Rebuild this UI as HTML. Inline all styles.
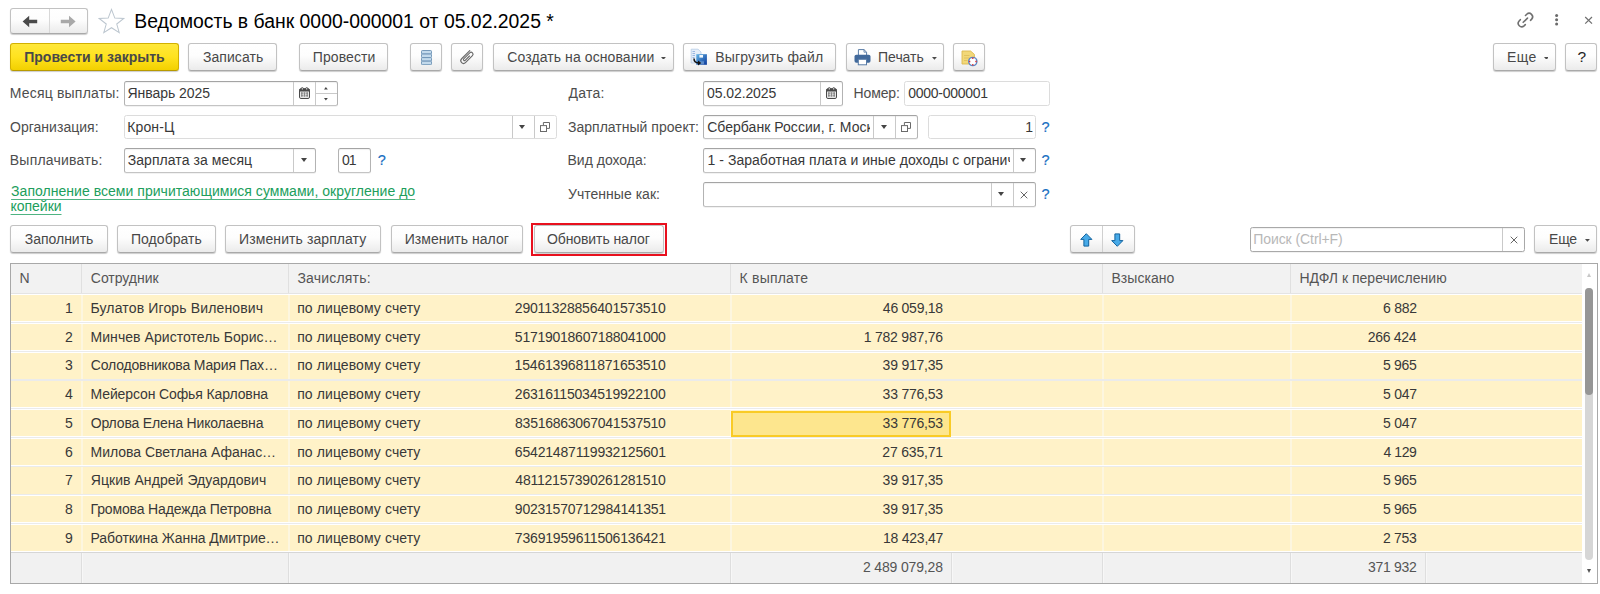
<!DOCTYPE html><html lang="ru"><head><meta charset="utf-8"><title>Ведомость в банк</title><style>
*{box-sizing:border-box;margin:0;padding:0}
html,body{width:1600px;height:594px;overflow:hidden;background:#fff}
body{font-family:"Liberation Sans",sans-serif;font-size:14px;color:#333;position:relative}
.a{position:absolute;white-space:nowrap}
.t{position:absolute;white-space:nowrap;font-size:14px;line-height:16px;color:#383838}
.btn{position:absolute;height:27.5px;border:1px solid #c2c2c2;border-bottom-color:#a9a9a9;border-radius:3px;
 background:linear-gradient(#ffffff 0%,#fdfdfd 45%,#ebebeb 100%);box-shadow:0 1px 1px rgba(0,0,0,.2)}
.btn.y{background:linear-gradient(#ffe83a 0%,#ffe21f 50%,#f2d000 100%);border-color:#d2b000;border-bottom-color:#b89a00}
.inp{position:absolute;height:24.6px;border:1px solid #b3b3b3;border-top-color:#a4a4a4;border-bottom-color:#c4c4c4;border-radius:2.5px;background:#fff;overflow:hidden;box-shadow:inset 0 1px 1px rgba(0,0,0,.06),0 1px 0 rgba(0,0,0,.05)}
.inp.l{border-color:#dcdcdc;box-shadow:none}
.dv{position:absolute;top:0;bottom:0;width:1px;background:#c9c9c9}
.tri{position:absolute;width:0;height:0;border-left:3px solid transparent;border-right:3px solid transparent;border-top:4px solid #444}
.row{position:absolute;left:11px;width:1571px;height:26.1px;background:#fff2c8}
.vs{position:absolute;width:2px;background:#fdf6df}
</style></head><body>
<div class="btn" style="left:10px;top:8px;width:77.5px;height:26px"><div class="dv" style="left:38px;background:#d8d8d8"></div><svg class="a" style="left:0;top:0" width="77" height="24" viewBox="0 0 77 24"><path d="M11.6 12.5 L18.2 6.7 V10.8 H26.2 V14.2 H18.2 V18.3 Z" fill="#4a4a4a"/><path d="M64.6 12.5 L58 6.7 V10.8 H49.8 V14.2 H58 V18.3 Z" fill="#a9a9a9"/></svg></div>
<svg class="a" style="left:98px;top:8px" width="28" height="26" viewBox="0 0 28 26"><path transform="translate(13.5 13.6) scale(1.07) translate(-13.5 -13.9)" d="M13.5 2.5 L16.6 10.6 L25 11 L18.4 16.2 L20.7 24.2 L13.5 19.6 L6.3 24.2 L8.6 16.2 L2 11 L10.4 10.6 Z" fill="#fff" stroke="#bcc6cf" stroke-width="0.95"/></svg>
<div class="t" style="left:134.30px;top:9.58px;font-size:19.4px;line-height:22px;color:#000;">Ведомость в банк 0000-000001 от 05.02.2025 *</div>
<svg class="a" style="left:1512px;top:8px" width="24" height="24" viewBox="0 0 24 24"><g fill="none" stroke="#707070" stroke-width="1.6" stroke-linecap="round"><path d="M13.5 7.5 L14.73 6.23 A3.5 3.5 0 0 1 19.67 11.17 L18.5 12.3"/><path d="M8.3 11.7 L7.13 12.93 A3.5 3.5 0 0 0 12.07 17.87 L13.3 16.6"/><path d="M11.2 14.3 L15.5 10.1"/></g></svg>
<svg class="a" style="left:1554px;top:13px" width="6" height="14" viewBox="0 0 6 14"><circle cx="2.6" cy="2.6" r="1.5" fill="#6a6a6a"/><circle cx="2.6" cy="6.85" r="1.5" fill="#6a6a6a"/><circle cx="2.6" cy="11.1" r="1.5" fill="#6a6a6a"/></svg>
<svg class="a" style="left:1584px;top:16px" width="10" height="9" viewBox="0 0 10 9"><path d="M1.2 1 L8 7.6 M8 1 L1.2 7.6" stroke="#707070" stroke-width="1.25" fill="none"/></svg>
<div class="btn y" style="left:10px;top:43px;width:168.6px"></div>
<div class="t" style="left:24.20px;top:48.55px;font-weight:700;color:#484848;letter-spacing:0.009px;">Провести и закрыть</div>
<div class="btn " style="left:188px;top:43px;width:89.2px"></div>
<div class="t" style="left:203.00px;top:48.55px;color:#484848;letter-spacing:0.050px;">Записать</div>
<div class="btn " style="left:298.5px;top:43px;width:89.5px"></div>
<div class="t" style="left:312.80px;top:48.55px;color:#484848;letter-spacing:0.100px;">Провести</div>
<div class="btn " style="left:410px;top:43px;width:31.7px"><svg class="a" style="left:9.7px;top:5.8px" width="11" height="15.2" viewBox="0 0 11 15.4" preserveAspectRatio="none"><rect x="0.5" y="0.5" width="10" height="3.6" rx="0.9" fill="#c3daec" stroke="#678fb3" stroke-width="0.9"/><rect x="0.5" y="4.1" width="10" height="3.6" rx="0.9" fill="#c3daec" stroke="#678fb3" stroke-width="0.9"/><rect x="0.5" y="7.7" width="10" height="3.6" rx="0.9" fill="#c3daec" stroke="#678fb3" stroke-width="0.9"/><rect x="0.5" y="11.3" width="10" height="3.6" rx="0.9" fill="#c3daec" stroke="#678fb3" stroke-width="0.9"/></svg></div>
<div class="btn " style="left:451px;top:43px;width:31.8px"><svg class="a" style="left:0;top:0" width="30" height="26" viewBox="0 0 30 26"><path transform="translate(15 13.2) rotate(45)" d="M-2.7 -6.6 V4.9 A2.7 2.7 0 0 0 2.7 4.9 V-5 A1.9 1.9 0 0 0 -1.1 -5 V3.5 A1 1 0 0 0 0.9 3.5 V-2.6" fill="none" stroke="#6a6a6a" stroke-width="1.15" stroke-linecap="round"/></svg></div>
<div class="btn " style="left:492.5px;top:43px;width:181.0px"></div>
<div class="t" style="left:507.25px;top:48.55px;color:#484848;letter-spacing:0.095px;">Создать на основании</div>
<svg class="a" style="left:661.3px;top:56.6px" width="4.9" height="2.8" viewBox="0 0 4.9 2.8"><path d="M0 0H4.9L2.45 2.8Z" fill="#4a4a4a"/></svg>
<div class="btn " style="left:683px;top:43px;width:153.3px"><svg class="a" style="left:6px;top:4px" width="18" height="19" viewBox="0 0 18 19"><defs><linearGradient id="fg" x1="0" y1="0" x2="1" y2="1"><stop offset="0" stop-color="#62b4e6"/><stop offset="1" stop-color="#0a389a"/></linearGradient></defs><path d="M1.2 1.2H8L11 4V15H1.2Z" fill="#e4edf8" stroke="#b5cbe6" stroke-width=".8"/><path d="M2.5 3.5H5M2.5 5.5H5M2.5 7.5H5M2.5 9.5H4.5" stroke="#8fb0dc" stroke-width=".9"/><rect x="6.3" y="6.2" width="10.6" height="10.6" fill="url(#fg)"/><rect x="9.4" y="7" width="3.6" height="2.6" fill="#f4f8fc"/><rect x="10" y="13.3" width="4" height="3" fill="#8fb4dc" opacity=".55"/><path d="M4 10.6 C4 13.6 5.6 15 8.6 15" stroke="#111" stroke-width="1.5" fill="none"/><path d="M8 12.6 L11.2 15 L8 17.4Z" fill="#111"/></svg></div>
<div class="t" style="left:715.30px;top:48.55px;color:#484848;letter-spacing:0.119px;">Выгрузить файл</div>
<div class="btn " style="left:846px;top:43px;width:98.0px"><svg class="a" style="left:6.6px;top:5.3px" width="17" height="16.4" viewBox="0 0 17 16.4"><path d="M4.4 6.5V0.6H10L12.6 3.2V6.5Z" fill="#fff" stroke="#587ba6" stroke-width="1"/><path d="M10 0.6V3.2H12.6" fill="none" stroke="#587ba6" stroke-width=".8"/><rect x="0.5" y="5.8" width="16" height="8" rx="1.8" fill="#41699b"/><rect x="4.3" y="10.3" width="8.2" height="5.5" fill="#fff" stroke="#587ba6" stroke-width="1"/></svg></div>
<div class="t" style="left:878.10px;top:48.55px;color:#484848;letter-spacing:-0.050px;">Печать</div>
<svg class="a" style="left:931.8px;top:56.9px" width="4.9" height="2.8" viewBox="0 0 4.9 2.8"><path d="M0 0H4.9L2.45 2.8Z" fill="#4a4a4a"/></svg>
<div class="btn " style="left:953px;top:43px;width:31.5px"><svg class="a" style="left:7px;top:5.6px" width="17" height="17" viewBox="0 0 17 17"><path d="M1 1 H9.6 L13.4 4.4 V14 H1Z" fill="#f2d878" stroke="#dcb94e" stroke-width=".9"/><path d="M3 5.5H8.5M3 8H8.5M3 10.5H6.5" stroke="#dfc05a" stroke-width=".9"/><circle cx="11.8" cy="11.5" r="4.1" fill="#fff" stroke="#5b87c5" stroke-width="1.4"/><path d="M11.8 7.6V9M11.8 14V15.4M7.9 11.5H9.3M14.3 11.5H15.7" stroke="#e03030" stroke-width="1.3"/></svg></div>
<div class="btn " style="left:1493px;top:43px;width:62.6px"></div>
<div class="t" style="left:1507.00px;top:48.55px;color:#484848;letter-spacing:0.450px;">Еще</div>
<svg class="a" style="left:1543.5px;top:56.6px" width="4.9" height="2.8" viewBox="0 0 4.9 2.8"><path d="M0 0H4.9L2.45 2.8Z" fill="#4a4a4a"/></svg>
<div class="btn " style="left:1565px;top:43px;width:32.0px"></div>
<div class="t" style="left:1577.45px;top:47.63px;font-size:15.5px;line-height:18px;color:#222;">?</div>
<div class="t" style="left:9.80px;top:85.15px;color:#4d4d4d;letter-spacing:0.185px;">Месяц выплаты:</div>
<div class="inp " style="left:124px;top:81px;width:213.8px;"><div class="dv" style="left:168.4px"></div><svg class="a" style="left:174px;top:5px" width="11" height="12" viewBox="0 0 11 12"><rect x="0.5" y="1.7" width="10" height="9.8" rx="1.4" fill="#e6e6e6" stroke="#4a4a4a" stroke-width="1"/><path d="M0.5 4.6V3.1Q0.5 1.7 1.9 1.7H9.1Q10.5 1.7 10.5 3.1V4.6Z" fill="#4a4a4a"/><rect x="2.1" y="0.2" width="2.3" height="2.6" rx="1.1" fill="#4a4a4a"/><rect x="6.6" y="0.2" width="2.3" height="2.6" rx="1.1" fill="#4a4a4a"/><rect x="2.8" y="1" width=".9" height="1.6" fill="#eee"/><rect x="7.3" y="1" width=".9" height="1.6" fill="#eee"/><path d="M2 6.1h1.7M4.7 6.1h1.6M7.3 6.1H9M2 8.8h1.7M4.7 8.8h1.6M7.3 8.8H9" stroke="#4a4a4a" stroke-width=".9"/><path d="M2.8 5.6V9.6M5.5 5.4V9.6M8.2 5.6V9.6" stroke="#8a8a8a" stroke-width="1.3"/></svg><div class="dv" style="left:190px"></div><div class="a" style="left:191px;top:10.5px;width:22px;height:1px;background:#c9c9c9"></div><svg class="a" style="left:199.3px;top:5.2px" width="4" height="14" viewBox="0 0 4 14"><path d="M0 2.4L1.9 0L3.8 2.4Z" fill="#444"/><path d="M0 11L1.9 13.4L3.8 11Z" fill="#444"/></svg></div>
<div class="t" style="left:127.45px;top:85.15px;letter-spacing:-0.035px;">Январь 2025</div>
<div class="t" style="left:568.50px;top:85.15px;color:#4d4d4d;letter-spacing:0.262px;">Дата:</div>
<div class="inp " style="left:703.3px;top:81px;width:140.0px;"><div class="dv" style="left:116px"></div><svg class="a" style="left:121.5px;top:5px" width="11" height="12" viewBox="0 0 11 12"><rect x="0.5" y="1.7" width="10" height="9.8" rx="1.4" fill="#e6e6e6" stroke="#4a4a4a" stroke-width="1"/><path d="M0.5 4.6V3.1Q0.5 1.7 1.9 1.7H9.1Q10.5 1.7 10.5 3.1V4.6Z" fill="#4a4a4a"/><rect x="2.1" y="0.2" width="2.3" height="2.6" rx="1.1" fill="#4a4a4a"/><rect x="6.6" y="0.2" width="2.3" height="2.6" rx="1.1" fill="#4a4a4a"/><rect x="2.8" y="1" width=".9" height="1.6" fill="#eee"/><rect x="7.3" y="1" width=".9" height="1.6" fill="#eee"/><path d="M2 6.1h1.7M4.7 6.1h1.6M7.3 6.1H9M2 8.8h1.7M4.7 8.8h1.6M7.3 8.8H9" stroke="#4a4a4a" stroke-width=".9"/><path d="M2.8 5.6V9.6M5.5 5.4V9.6M8.2 5.6V9.6" stroke="#8a8a8a" stroke-width="1.3"/></svg></div>
<div class="t" style="left:707.10px;top:85.15px;letter-spacing:-0.100px;">05.02.2025</div>
<div class="t" style="left:853.60px;top:85.15px;color:#4d4d4d;letter-spacing:-0.150px;">Номер:</div>
<div class="inp l" style="left:904px;top:81px;width:145.8px;"></div>
<div class="t" style="left:908.20px;top:85.15px;letter-spacing:-0.270px;">0000-000001</div>
<div class="t" style="left:10.05px;top:119.35px;color:#4d4d4d;letter-spacing:0.014px;">Организация:</div>
<div class="inp l" style="left:124px;top:115px;width:432.5px;height:24px;"><div class="dv" style="left:387px"></div><div class="tri" style="left:394px;top:9px"></div><div class="dv" style="left:409px"></div><svg class="a" style="left:415px;top:5.6px" width="10" height="10" viewBox="0 0 10 10"><path d="M3.4 3.4V0.5H9.5V6.4H6.6" fill="none" stroke="#6a6a6a" stroke-width="1"/><rect x="0.5" y="3.6" width="6" height="5.9" fill="#fff" stroke="#6a6a6a" stroke-width="1"/></svg></div>
<div class="t" style="left:127.20px;top:119.35px;letter-spacing:0.150px;">Крон-Ц</div>
<div class="t" style="left:568.00px;top:119.35px;color:#4d4d4d;letter-spacing:0.018px;">Зарплатный проект:</div>
<div class="inp " style="left:703.3px;top:115px;width:214.5px;height:24px;"><div class="dv" style="left:168.7px"></div><div class="tri" style="left:176.3px;top:9px"></div><div class="dv" style="left:190.6px"></div><svg class="a" style="left:197px;top:5.6px" width="10" height="10" viewBox="0 0 10 10"><path d="M3.4 3.4V0.5H9.5V6.4H6.6" fill="none" stroke="#6a6a6a" stroke-width="1"/><rect x="0.5" y="3.6" width="6" height="5.9" fill="#fff" stroke="#6a6a6a" stroke-width="1"/></svg></div>
<div class="t" style="left:707.15px;top:119.35px;letter-spacing:0.040px;width:163px;overflow:hidden;">Сбербанк России, г. Моск</div>
<div class="inp l" style="left:928.4px;top:115px;width:107.2px;height:24px;"></div>
<div class="t" style="left:1025.30px;top:118.95px;">1</div>
<div class="t" style="left:1041.50px;top:118.78px;font-size:14.5px;line-height:17px;color:#1a70c2;-webkit-text-stroke:0.2px #1a70c2;">?</div>
<div class="t" style="left:9.80px;top:152.45px;color:#4d4d4d;letter-spacing:0.223px;">Выплачивать:</div>
<div class="inp " style="left:124px;top:148px;width:191.8px;"><div class="dv" style="left:168px"></div><div class="tri" style="left:176px;top:9px"></div></div>
<div class="t" style="left:127.70px;top:152.45px;letter-spacing:0.069px;">Зарплата за месяц</div>
<div class="inp " style="left:338.4px;top:148px;width:32.2px;"></div>
<div class="t" style="left:341.90px;top:152.45px;letter-spacing:-0.900px;">01</div>
<div class="t" style="left:377.70px;top:152.08px;font-size:14.5px;line-height:17px;color:#1a70c2;-webkit-text-stroke:0.2px #1a70c2;">?</div>
<div class="t" style="left:567.50px;top:152.45px;color:#4d4d4d;">Вид дохода:</div>
<div class="inp " style="left:703.3px;top:148px;width:332.3px;height:24.6px;"><div class="dv" style="left:308.3px"></div><div class="tri" style="left:316px;top:9px"></div></div>
<div class="t" style="left:707.50px;top:152.45px;letter-spacing:0.040px;width:302px;overflow:hidden;">1 - Заработная плата и иные доходы с огранич</div>
<div class="t" style="left:1041.50px;top:152.08px;font-size:14.5px;line-height:17px;color:#1a70c2;-webkit-text-stroke:0.2px #1a70c2;">?</div>
<div class="t" style="left:11.10px;top:182.75px;color:#209e5c;letter-spacing:0.033px;text-decoration:underline;text-decoration-skip-ink:none;text-decoration-color:#4fb382;text-decoration-thickness:1px;text-underline-offset:2.5px;">Заполнение всеми причитающимися суммами, округление до</div>
<div class="t" style="left:10.60px;top:198.45px;color:#209e5c;letter-spacing:-0.042px;text-decoration:underline;text-decoration-skip-ink:none;text-decoration-color:#4fb382;text-decoration-thickness:1px;text-underline-offset:2.5px;">копейки</div>
<div class="t" style="left:568.00px;top:186.15px;color:#4d4d4d;letter-spacing:0.025px;">Учтенные как:</div>
<div class="inp " style="left:703.3px;top:182px;width:332.3px;height:24.6px;"><div class="dv" style="left:286.6px"></div><div class="tri" style="left:294px;top:9px"></div><div class="dv" style="left:308.3px"></div><svg class="a" style="left:315.5px;top:7.5px" width="8" height="8" viewBox="0 0 8 8"><path d="M0.7 0.7L7.3 7.3M7.3 0.7L0.7 7.3" stroke="#666" stroke-width="1"/></svg></div>
<div class="t" style="left:1041.50px;top:185.98px;font-size:14.5px;line-height:17px;color:#1a70c2;-webkit-text-stroke:0.2px #1a70c2;">?</div>
<div class="btn " style="left:10px;top:225.4px;width:97.7px"></div>
<div class="t" style="left:24.70px;top:230.95px;color:#484848;letter-spacing:-0.006px;">Заполнить</div>
<div class="btn " style="left:117px;top:225.4px;width:98.5px"></div>
<div class="t" style="left:131.00px;top:230.95px;color:#484848;letter-spacing:0.037px;">Подобрать</div>
<div class="btn " style="left:225px;top:225.4px;width:155.9px"></div>
<div class="t" style="left:239.10px;top:230.95px;color:#484848;letter-spacing:0.084px;">Изменить зарплату</div>
<div class="btn " style="left:390.5px;top:225.4px;width:132.1px"></div>
<div class="t" style="left:404.70px;top:230.95px;color:#484848;letter-spacing:0.031px;">Изменить налог</div>
<div class="btn " style="left:534px;top:225.4px;width:130.0px"></div>
<div class="t" style="left:546.95px;top:230.95px;color:#484848;letter-spacing:-0.092px;">Обновить налог</div>
<div class="a" style="left:531px;top:222.8px;width:136.2px;height:33.2px;border:2px solid #e8101e"></div>
<div class="btn" style="left:1070px;top:225.4px;width:64.6px"><div class="dv" style="left:31px;background:#d0d0d0"></div><svg class="a" style="left:8.8px;top:6.2px" width="13" height="14" viewBox="0 0 13 14"><path d="M6.3 0.7 L11.9 6.4 H8.7 V13.1 H3.9 V6.4 H0.7Z" fill="#47aae8" stroke="#12639f" stroke-width="1" stroke-linejoin="round"/></svg><svg class="a" style="left:40.2px;top:6.2px" width="13" height="14" viewBox="0 0 13 14"><path d="M6.3 13.3 L11.9 7.6 H8.7 V0.9 H3.9 V7.6 H0.7Z" fill="#47aae8" stroke="#12639f" stroke-width="1" stroke-linejoin="round"/></svg></div>
<div class="inp " style="left:1250px;top:227.2px;width:275.0px;border-color:#a9a9a9;"><div class="dv" style="left:251px"></div><svg class="a" style="left:258.5px;top:7.5px" width="8" height="8" viewBox="0 0 8 8"><path d="M0.7 0.7L7.3 7.3M7.3 0.7L0.7 7.3" stroke="#666" stroke-width="1"/></svg></div>
<div class="t" style="left:1253.20px;top:230.95px;color:#b8b8b8;letter-spacing:-0.073px;">Поиск (Ctrl+F)</div>
<div class="btn " style="left:1534px;top:225.4px;width:63.0px"></div>
<div class="t" style="left:1549.00px;top:230.95px;color:#484848;letter-spacing:-0.200px;">Еще</div>
<svg class="a" style="left:1585.1px;top:239.0px" width="4.9" height="2.8" viewBox="0 0 4.9 2.8"><path d="M0 0H4.9L2.45 2.8Z" fill="#4a4a4a"/></svg>
<div class="a" style="left:10px;top:263px;width:1588px;height:320.5px;border:1px solid #a8a8a8;background:#fff"></div>
<div class="a" style="left:11px;top:264px;width:1571px;height:29.2px;background:#f2f2f2"></div>
<div class="a" style="left:11px;top:293px;width:1571px;height:1.2px;background:#e4e4e4"></div>
<div class="a" style="left:81px;top:264px;width:1.3px;height:29.2px;background:#e0e0e0"></div>
<div class="a" style="left:288px;top:264px;width:1.3px;height:29.2px;background:#e0e0e0"></div>
<div class="a" style="left:730px;top:264px;width:1.3px;height:29.2px;background:#e0e0e0"></div>
<div class="a" style="left:1102px;top:264px;width:1.3px;height:29.2px;background:#e0e0e0"></div>
<div class="a" style="left:1290px;top:264px;width:1.3px;height:29.2px;background:#e0e0e0"></div>
<div class="t" style="left:19.40px;top:269.75px;color:#555;">N</div>
<div class="t" style="left:90.85px;top:269.75px;color:#555;letter-spacing:-0.031px;">Сотрудник</div>
<div class="t" style="left:297.40px;top:269.75px;color:#555;letter-spacing:0.194px;">Зачислять:</div>
<div class="t" style="left:739.50px;top:269.75px;color:#555;letter-spacing:0.219px;">К выплате</div>
<div class="t" style="left:1111.50px;top:269.75px;color:#555;letter-spacing:0.029px;">Взыскано</div>
<div class="t" style="left:1299.40px;top:269.75px;color:#555;letter-spacing:0.006px;">НДФЛ к перечислению</div>
<div class="row" style="top:295.10px"></div>
<div class="a" style="left:11px;top:322.00px;width:1571px;height:1.1px;background:#ebebeb"></div>
<div class="vs" style="left:81px;top:295.10px;height:26.1px"></div>
<div class="vs" style="left:288px;top:295.10px;height:26.1px"></div>
<div class="vs" style="left:730px;top:295.10px;height:26.1px"></div>
<div class="vs" style="left:1102px;top:295.10px;height:26.1px"></div>
<div class="vs" style="left:1290px;top:295.10px;height:26.1px"></div>
<div class="t" style="left:65.10px;top:300.00px;">1</div>
<div class="t" style="left:90.50px;top:300.00px;letter-spacing:0.145px;">Булатов Игорь Виленович</div>
<div class="t" style="left:297.20px;top:300.00px;letter-spacing:0.094px;">по лицевому счету</div>
<div class="t" style="left:514.85px;top:300.00px;letter-spacing:-0.200px;">29011328856401573510</div>
<div class="t" style="left:882.87px;top:300.00px;letter-spacing:-0.253px;">46 059,18</div>
<div class="t" style="left:1382.89px;top:300.00px;letter-spacing:-0.210px;">6 882</div>
<div class="row" style="top:323.83px"></div>
<div class="a" style="left:11px;top:350.73px;width:1571px;height:1.1px;background:#ebebeb"></div>
<div class="vs" style="left:81px;top:323.83px;height:26.1px"></div>
<div class="vs" style="left:288px;top:323.83px;height:26.1px"></div>
<div class="vs" style="left:730px;top:323.83px;height:26.1px"></div>
<div class="vs" style="left:1102px;top:323.83px;height:26.1px"></div>
<div class="vs" style="left:1290px;top:323.83px;height:26.1px"></div>
<div class="t" style="left:65.10px;top:328.73px;">2</div>
<div class="t" style="left:90.50px;top:328.73px;letter-spacing:0.057px;">Минчев Аристотель Борис…</div>
<div class="t" style="left:297.20px;top:328.73px;letter-spacing:0.094px;">по лицевому счету</div>
<div class="t" style="left:514.85px;top:328.73px;letter-spacing:-0.253px;">51719018607188041000</div>
<div class="t" style="left:863.74px;top:328.73px;letter-spacing:-0.217px;">1 782 987,76</div>
<div class="t" style="left:1367.81px;top:328.73px;letter-spacing:-0.293px;">266 424</div>
<div class="row" style="top:352.56px"></div>
<div class="a" style="left:11px;top:379.46px;width:1571px;height:1.1px;background:#ebebeb"></div>
<div class="vs" style="left:81px;top:352.56px;height:26.1px"></div>
<div class="vs" style="left:288px;top:352.56px;height:26.1px"></div>
<div class="vs" style="left:730px;top:352.56px;height:26.1px"></div>
<div class="vs" style="left:1102px;top:352.56px;height:26.1px"></div>
<div class="vs" style="left:1290px;top:352.56px;height:26.1px"></div>
<div class="t" style="left:65.10px;top:357.46px;">3</div>
<div class="t" style="left:90.75px;top:357.46px;letter-spacing:-0.163px;">Солодовникова Мария Пах…</div>
<div class="t" style="left:297.20px;top:357.46px;letter-spacing:0.094px;">по лицевому счету</div>
<div class="t" style="left:514.60px;top:357.46px;letter-spacing:-0.187px;">15461396811871653510</div>
<div class="t" style="left:882.62px;top:357.46px;letter-spacing:-0.221px;">39 917,35</div>
<div class="t" style="left:1382.89px;top:357.46px;letter-spacing:-0.273px;">5 965</div>
<div class="row" style="top:381.29px"></div>
<div class="a" style="left:11px;top:408.19px;width:1571px;height:1.1px;background:#ebebeb"></div>
<div class="vs" style="left:81px;top:381.29px;height:26.1px"></div>
<div class="vs" style="left:288px;top:381.29px;height:26.1px"></div>
<div class="vs" style="left:730px;top:381.29px;height:26.1px"></div>
<div class="vs" style="left:1102px;top:381.29px;height:26.1px"></div>
<div class="vs" style="left:1290px;top:381.29px;height:26.1px"></div>
<div class="t" style="left:65.10px;top:386.19px;">4</div>
<div class="t" style="left:90.50px;top:386.19px;letter-spacing:-0.114px;">Мейерсон Софья Карловна</div>
<div class="t" style="left:297.20px;top:386.19px;letter-spacing:0.094px;">по лицевому счету</div>
<div class="t" style="left:514.85px;top:386.19px;letter-spacing:-0.200px;">26316115034519922100</div>
<div class="t" style="left:882.62px;top:386.19px;letter-spacing:-0.221px;">33 776,53</div>
<div class="t" style="left:1382.89px;top:386.19px;letter-spacing:-0.210px;">5 047</div>
<div class="row" style="top:410.02px"></div>
<div class="a" style="left:11px;top:436.92px;width:1571px;height:1.1px;background:#ebebeb"></div>
<div class="vs" style="left:81px;top:410.02px;height:26.1px"></div>
<div class="vs" style="left:288px;top:410.02px;height:26.1px"></div>
<div class="vs" style="left:730px;top:410.02px;height:26.1px"></div>
<div class="vs" style="left:1102px;top:410.02px;height:26.1px"></div>
<div class="vs" style="left:1290px;top:410.02px;height:26.1px"></div>
<div class="a" style="left:731px;top:410.52px;width:220px;height:26px;background:#fde68e;border:2.4px solid #f9cb26"></div>
<div class="t" style="left:65.10px;top:414.92px;">5</div>
<div class="t" style="left:90.75px;top:414.92px;letter-spacing:-0.166px;">Орлова Елена Николаевна</div>
<div class="t" style="left:297.20px;top:414.92px;letter-spacing:0.094px;">по лицевому счету</div>
<div class="t" style="left:515.10px;top:414.92px;letter-spacing:-0.266px;">83516863067041537510</div>
<div class="t" style="left:882.62px;top:414.92px;letter-spacing:-0.221px;">33 776,53</div>
<div class="t" style="left:1382.89px;top:414.92px;letter-spacing:-0.210px;">5 047</div>
<div class="row" style="top:438.75px"></div>
<div class="a" style="left:11px;top:465.65px;width:1571px;height:1.1px;background:#ebebeb"></div>
<div class="vs" style="left:81px;top:438.75px;height:26.1px"></div>
<div class="vs" style="left:288px;top:438.75px;height:26.1px"></div>
<div class="vs" style="left:730px;top:438.75px;height:26.1px"></div>
<div class="vs" style="left:1102px;top:438.75px;height:26.1px"></div>
<div class="vs" style="left:1290px;top:438.75px;height:26.1px"></div>
<div class="t" style="left:65.10px;top:443.65px;">6</div>
<div class="t" style="left:90.50px;top:443.65px;letter-spacing:-0.020px;">Милова Светлана Афанас…</div>
<div class="t" style="left:297.20px;top:443.65px;letter-spacing:0.094px;">по лицевому счету</div>
<div class="t" style="left:514.85px;top:443.65px;letter-spacing:-0.187px;">65421487119932125601</div>
<div class="t" style="left:882.37px;top:443.65px;letter-spacing:-0.190px;">27 635,71</div>
<div class="t" style="left:1383.39px;top:443.65px;letter-spacing:-0.398px;">4 129</div>
<div class="row" style="top:467.48px"></div>
<div class="a" style="left:11px;top:494.38px;width:1571px;height:1.1px;background:#ebebeb"></div>
<div class="vs" style="left:81px;top:467.48px;height:26.1px"></div>
<div class="vs" style="left:288px;top:467.48px;height:26.1px"></div>
<div class="vs" style="left:730px;top:467.48px;height:26.1px"></div>
<div class="vs" style="left:1102px;top:467.48px;height:26.1px"></div>
<div class="vs" style="left:1290px;top:467.48px;height:26.1px"></div>
<div class="t" style="left:65.10px;top:472.38px;">7</div>
<div class="t" style="left:90.75px;top:472.38px;letter-spacing:0.055px;">Яцкив Андрей Эдуардович</div>
<div class="t" style="left:297.20px;top:472.38px;letter-spacing:0.094px;">по лицевому счету</div>
<div class="t" style="left:515.35px;top:472.38px;letter-spacing:-0.226px;">48112157390261281510</div>
<div class="t" style="left:882.62px;top:472.38px;letter-spacing:-0.221px;">39 917,35</div>
<div class="t" style="left:1382.89px;top:472.38px;letter-spacing:-0.273px;">5 965</div>
<div class="row" style="top:496.21px"></div>
<div class="a" style="left:11px;top:523.11px;width:1571px;height:1.1px;background:#ebebeb"></div>
<div class="vs" style="left:81px;top:496.21px;height:26.1px"></div>
<div class="vs" style="left:288px;top:496.21px;height:26.1px"></div>
<div class="vs" style="left:730px;top:496.21px;height:26.1px"></div>
<div class="vs" style="left:1102px;top:496.21px;height:26.1px"></div>
<div class="vs" style="left:1290px;top:496.21px;height:26.1px"></div>
<div class="t" style="left:65.10px;top:501.11px;">8</div>
<div class="t" style="left:90.50px;top:501.11px;letter-spacing:-0.143px;">Громова Надежда Петровна</div>
<div class="t" style="left:297.20px;top:501.11px;letter-spacing:0.094px;">по лицевому счету</div>
<div class="t" style="left:514.85px;top:501.11px;letter-spacing:-0.239px;">90231570712984141351</div>
<div class="t" style="left:882.62px;top:501.11px;letter-spacing:-0.221px;">39 917,35</div>
<div class="t" style="left:1382.89px;top:501.11px;letter-spacing:-0.273px;">5 965</div>
<div class="row" style="top:524.94px"></div>
<div class="vs" style="left:81px;top:524.94px;height:26.1px"></div>
<div class="vs" style="left:288px;top:524.94px;height:26.1px"></div>
<div class="vs" style="left:730px;top:524.94px;height:26.1px"></div>
<div class="vs" style="left:1102px;top:524.94px;height:26.1px"></div>
<div class="vs" style="left:1290px;top:524.94px;height:26.1px"></div>
<div class="t" style="left:65.10px;top:529.84px;">9</div>
<div class="t" style="left:90.50px;top:529.84px;letter-spacing:-0.067px;">Работкина Жанна Дмитрие…</div>
<div class="t" style="left:297.20px;top:529.84px;letter-spacing:0.094px;">по лицевому счету</div>
<div class="t" style="left:514.85px;top:529.84px;letter-spacing:-0.187px;">73691959611506136421</div>
<div class="t" style="left:883.02px;top:529.84px;letter-spacing:-0.240px;">18 423,47</div>
<div class="t" style="left:1382.89px;top:529.84px;letter-spacing:-0.273px;">2 753</div>
<div class="a" style="left:11px;top:553px;width:1571px;height:30px;background:#f1f1f1"></div>
<div class="a" style="left:11px;top:552px;width:1571px;height:1.4px;background:#d6d6d6"></div>
<div class="a" style="left:81px;top:553.4px;width:1px;height:29.6px;background:#dedede"></div><div class="a" style="left:82px;top:553.4px;width:1px;height:29.6px;background:#f7f7f7"></div>
<div class="a" style="left:288px;top:553.4px;width:1px;height:29.6px;background:#dedede"></div><div class="a" style="left:289px;top:553.4px;width:1px;height:29.6px;background:#f7f7f7"></div>
<div class="a" style="left:730px;top:553.4px;width:1px;height:29.6px;background:#dedede"></div><div class="a" style="left:731px;top:553.4px;width:1px;height:29.6px;background:#f7f7f7"></div>
<div class="a" style="left:1102px;top:553.4px;width:1px;height:29.6px;background:#dedede"></div><div class="a" style="left:1103px;top:553.4px;width:1px;height:29.6px;background:#f7f7f7"></div>
<div class="a" style="left:1290px;top:553.4px;width:1px;height:29.6px;background:#dedede"></div><div class="a" style="left:1291px;top:553.4px;width:1px;height:29.6px;background:#f7f7f7"></div>
<div class="a" style="left:951px;top:553.4px;width:1px;height:29.6px;background:#dedede"></div><div class="a" style="left:952px;top:553.4px;width:1px;height:29.6px;background:#f7f7f7"></div>
<div class="a" style="left:1425px;top:553.4px;width:1px;height:29.6px;background:#dedede"></div><div class="a" style="left:1426px;top:553.4px;width:1px;height:29.6px;background:#f7f7f7"></div>
<div class="t" style="left:862.99px;top:559.15px;color:#555;letter-spacing:-0.158px;">2 489 079,28</div>
<div class="t" style="left:1368.06px;top:559.15px;color:#555;letter-spacing:-0.293px;">371 932</div>
<div class="a" style="left:1582px;top:264px;width:15px;height:319px;background:#fff"></div>
<div class="a" style="left:1585px;top:288px;width:8px;height:272px;background:#d6d6d6;border-radius:4px"></div>
<div class="a" style="left:1585px;top:288px;width:8px;height:107px;background:#969696;border-radius:4px"></div>
<div class="tri" style="left:1587px;top:273px;border-width:0 2.5px 4px 2.5px;border-style:solid;border-color:transparent transparent #c8c8c8 transparent"></div>
<div class="tri" style="left:1587px;top:569px;border-left-width:2.5px;border-right-width:2.5px;border-top:4px solid #555"></div>
</body></html>
